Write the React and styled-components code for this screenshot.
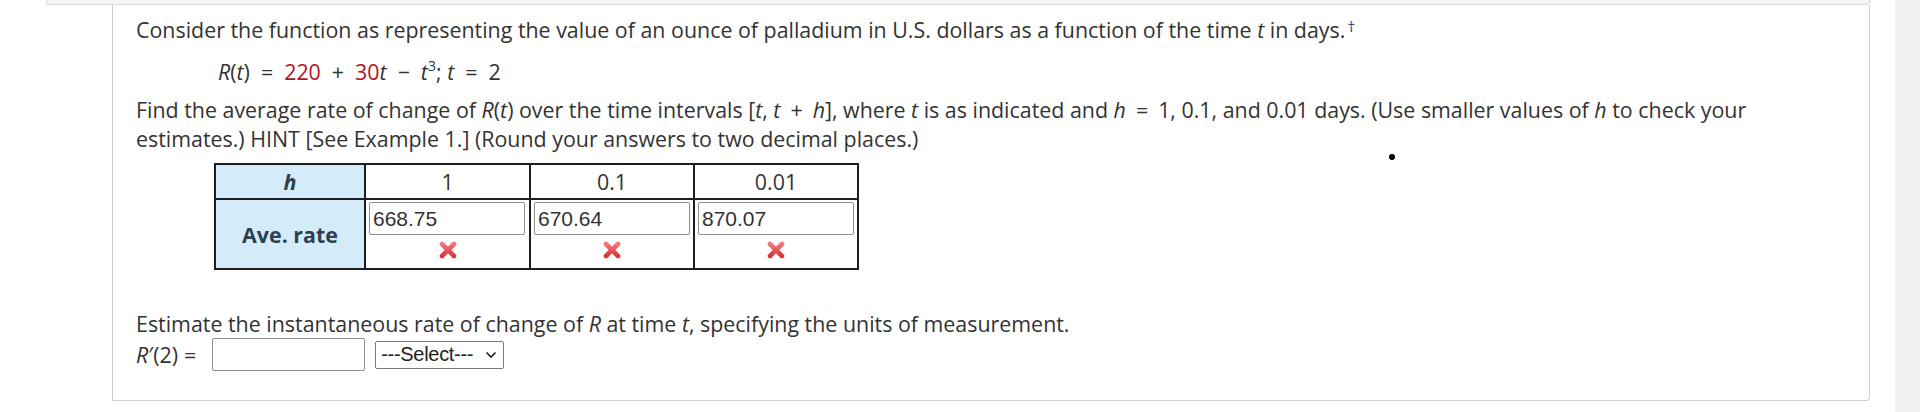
import React from 'react';
import styled, { createGlobalStyle } from 'styled-components';

const GlobalStyle = createGlobalStyle`
  html, body {
    margin: 0;
    padding: 0;
    background: #fff;
  }
  body {
    font-family: "Open Sans", "DejaVu Sans", sans-serif;
    color: #333;
  }
`;

const Page = styled.div`
  display: flex;
  width: 1920px;
  height: 412px;
  overflow: hidden;
`;

const Main = styled.div`
  flex: 1;
  padding: 0 25px 0 46px;
`;

const Gutter = styled.div`
  width: 25px;
  background: #f0f0f0;
`;

const PrevStrip = styled.div`
  height: 4px;
  background: #f6f6f6;
  border: 1px solid #dcdcdc;
  border-top: none;
  border-radius: 0 0 4px 0;
`;

const Card = styled.div`
  position: relative;
  margin-left: 66px;
  height: 396px;
  box-sizing: border-box;
  border: 1px solid #cfcfcf;
  border-top: none;
  border-radius: 0 0 4px 0;
  padding: 10px 24px 0 23px;
  font-size: 21.4px;
  line-height: 29px;
`;

const Para = styled.p`
  margin: ${p => p.$mt || 0}px 0 0;
`;

const Formula = styled.div`
  margin: 13px 0 9px 82px;
`;

const Var = styled.i``;

const Op = styled.span`
  margin: 0 ${p => p.$m ?? 11}px;
`;

const Red = styled.span`
  color: #b5121b;
`;

const Dagger = styled.sup`
  color: #2a3a8c;
  font-size: 15px;
  vertical-align: 6px;
  line-height: 0;
  margin-left: 2px;
`;

const Sup = styled.sup`
  font-size: 14px;
  vertical-align: 9px;
  line-height: 0;
`;

const Dot = styled.span`
  position: absolute;
  left: 1276px;
  top: 149px;
  width: 6px;
  height: 6px;
  border-radius: 50%;
  background: #000;
`;

const Table = styled.table`
  border-collapse: collapse;
  margin: 10px 0 0 78px;
  table-layout: fixed;
`;

const Th = styled.th`
  border: 2px solid #1e1e1e;
  height: 33px;
  padding: 0;
  text-align: center;
  font-weight: ${p => (p.$label ? 700 : 400)};
  font-style: ${p => (p.$label ? 'italic' : 'normal')};
  background: ${p => (p.$label ? '#d4ecf9' : '#fff')};
  color: ${p => (p.$label ? '#2e3f4f' : '#333')};
  width: ${p => p.$w}px;
`;

const RowLabel = styled.td`
  border: 2px solid #1e1e1e;
  background: #d4ecf9;
  color: #2e3f4f;
  font-weight: 700;
  text-align: center;
  height: 68px;
  padding: 0;
`;

const Cell = styled.td`
  border: 2px solid #1e1e1e;
  padding: 2px 3px 0;
  vertical-align: top;
  text-align: center;
`;

const AnswerBox = styled.input`
  display: block;
  box-sizing: border-box;
  width: ${p => p.$w || 156}px;
  height: 33px;
  border: 1px solid #8f8f8f;
  border-radius: 2px;
  padding: 0 3px;
  font-family: "Liberation Sans", Arial, sans-serif;
  font-size: 21px;
  color: #333;
  background: #fff;
`;

const Mark = styled.svg`
  display: block;
  margin: 6px auto 0;
`;

const AnswerLine = styled.div`
  display: flex;
  align-items: center;
  gap: 10px;
  height: 33px;
`;

const SelectBox = styled.div`
  display: flex;
  align-items: center;
  justify-content: space-between;
  box-sizing: border-box;
  width: 129px;
  height: 28px;
  border: 1px solid #7a7a7a;
  border-radius: 2px;
  padding: 0 6px 0 5px;
  font-family: "Liberation Sans", Arial, sans-serif;
  font-size: 20px;
  letter-spacing: -0.3px;
  color: #222;
`;

const WrongMark = () => (
  <Mark width="20" height="18" viewBox="0 0 20 18">
    <defs>
      <linearGradient id="xg" x1="0" y1="0" x2="0" y2="1">
        <stop offset="0" stopColor="#f3777a" />
        <stop offset="1" stopColor="#d9363c" />
      </linearGradient>
    </defs>
    <path d="M4 3 L16 15 M16 3 L4 15" stroke="url(#xg)" strokeWidth="4.6" strokeLinecap="round" fill="none" />
  </Mark>
);

const answers = ['668.75', '670.64', '870.07'];

export default function App() {
  return (
    <Page>
      <GlobalStyle />
      <Main>
        <PrevStrip />
        <Card>
          <Para>
            Consider the function as representing the value of an ounce of palladium in U.S. dollars as a function of the time <Var>t</Var> in days.<Dagger>†</Dagger>
          </Para>
          <Formula>
            <Var>R</Var>(<Var>t</Var>)<Op>=</Op><Red>220</Red><Op>+</Op><Red>30</Red><Var>t</Var><Op>−</Op><Var>t</Var><Sup>3</Sup>; <Var>t</Var><Op>=</Op>2
          </Formula>
          <Para>
            Find the average rate of change of <Var>R</Var>(<Var>t</Var>) over the time intervals [<Var>t</Var>, <Var>t</Var><Op $m={10}>+</Op><Var>h</Var>], where <Var>t</Var> is as indicated and <Var>h</Var><Op $m={10}>=</Op>1, 0.1, and 0.01 days. (Use smaller values of <Var>h</Var> to check your estimates.) HINT [See Example 1.] (Round your answers to two decimal places.)
          </Para>
          <Dot />
          <Table>
            <thead>
              <tr>
                <Th $label $w={148}>h</Th>
                <Th $w={163}>1</Th>
                <Th $w={162}>0.1</Th>
                <Th $w={162}>0.01</Th>
              </tr>
            </thead>
            <tbody>
              <tr>
                <RowLabel>Ave. rate</RowLabel>
                {answers.map(a => (
                  <Cell key={a}>
                    <AnswerBox readOnly value={a} />
                    <WrongMark />
                  </Cell>
                ))}
              </tr>
            </tbody>
          </Table>
          <Para $mt={39}>
            Estimate the instantaneous rate of change of <Var>R</Var> at time <Var>t</Var>, specifying the units of measurement.
          </Para>
          <AnswerLine>
            <span><Var>R</Var>′(2)<Op $m={6}>=</Op></span>
            <AnswerBox readOnly value="" $w={153} />
            <SelectBox>
              <span>---Select---</span>
              <svg width="12" height="8" viewBox="0 0 12 8">
                <path d="M1.5 1.5 L6 6 L10.5 1.5" stroke="#222" strokeWidth="1.6" fill="none" />
              </svg>
            </SelectBox>
          </AnswerLine>
        </Card>
      </Main>
      <Gutter />
    </Page>
  );
}
